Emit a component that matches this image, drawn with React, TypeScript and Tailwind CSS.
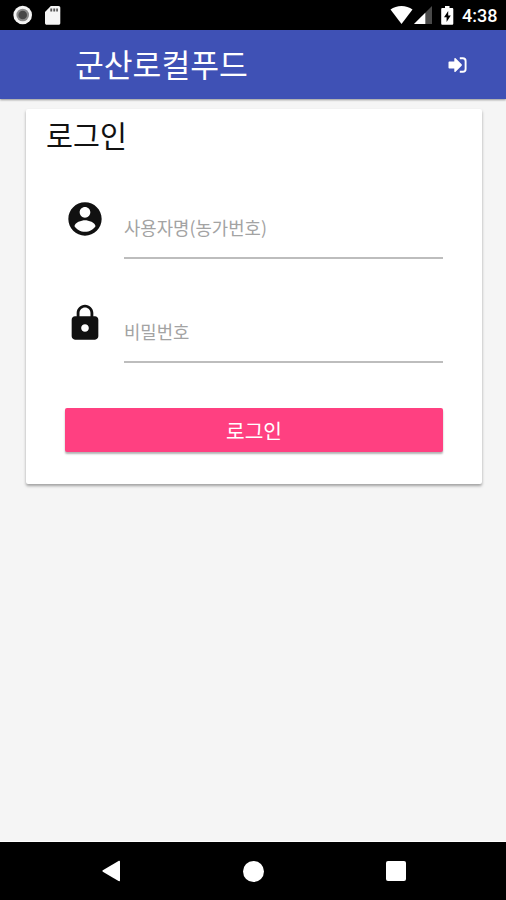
import React from 'react';

const StatusBar: React.FC = () => (
  <div className="flex h-[30px] shrink-0 items-center justify-between bg-black pl-[13px] pr-[9px] text-white">
    <div className="flex items-center gap-3">
      <svg width="20" height="20" viewBox="0 0 20 20">
        <circle cx="9.700" cy="10" r="9.300" fill="#f5f5f5" />
        <circle cx="9.700" cy="10" r="6.300" fill="#8b8b8b" />
        <circle cx="9.700" cy="10" r="4.300" fill="#484848" />
      </svg>
      <svg width="16" height="19" viewBox="0 0 16 19">
        <path
          d="M5.800 0H13.500C14.600 0 15.300.7 15.300 1.800V17c0 1.100-.7 1.800-1.800 1.800H1.800C.7 18.800 0 18.100 0 17V6z"
          fill="#f5f5f5"
        />
        <path d="M5.300 2.500h1.900v3H5.300zM8.300 2.500h1.900v3H8.300zM11.200 2.500h1.700v3h-1.700z" fill="#555" />
      </svg>
    </div>
    <div className="flex items-center">
      <svg width="24" height="18" viewBox="0 0 24 18">
        <path d="M.5 3.600C6.500-1.200 16.500-1.200 22.500 3.600L11.500 18z" fill="#fff" />
      </svg>
      <svg width="18" height="18" viewBox="0 0 18 18">
        <path d="M18 0V18H0z" fill="#4a4a4a" />
        <path d="M11.300 6.700V18H0z" fill="#fff" />
      </svg>
      <svg className="ml-[9px]" width="13" height="19" viewBox="0 0 13 19">
        <path d="M4 0h4.500v2H11c.8 0 1.300.5 1.300 1.300v14.200c0 .8-.5 1.300-1.300 1.300H1.500c-.8 0-1.300-.5-1.300-1.300V3.300C.2 2.500.7 2 1.500 2H4z" fill="#fff" />
        <path d="M7.200 5L3 11.200h2.600v4.700L9.800 9.500H7.200z" fill="#000" />
      </svg>
      <span className="ml-2 w-[35px] whitespace-nowrap pt-px font-['Roboto',sans-serif] text-[18px] font-medium leading-[29px]">
        4:38
      </span>
    </div>
  </div>
);

const Header: React.FC = () => (
  <header className="z-10 flex h-[69px] shrink-0 items-center justify-between bg-[#3f51b5] pl-[75px] pr-[39px] text-white shadow-[0_1px_2px_rgba(0,0,0,0.4)]">
    <h1 className="pb-[1px] text-[31.300px] leading-[68px]">군산로컬푸드</h1>
    <button aria-label="로그인">
      <svg width="19" height="16" viewBox="0 0 19 16">
        <path d="M1.300 4.500h5V1.800c0-.9.700-1.200 1.300-.6l6 6c.5.500.5 1.100 0 1.600l-6 6c-.6.600-1.300.3-1.300-.6v-2.700h-5c-.5 0-.8-.3-.8-.8V5.300c0-.5.300-.8.800-.8z" fill="#fff" />
        <path d="M11.800 1.300h3c1.700 0 2.800 1.100 2.800 2.800v7.800c0 1.700-1.100 2.800-2.800 2.800h-3" fill="none" stroke="#fff" strokeWidth="1.900" />
      </svg>
    </button>
  </header>
);

interface FieldProps {
  icon: string;
  label: string;
  type: string;
}

const Field: React.FC<FieldProps> = ({ icon, label, type }) => (
  <div className="flex h-[70px] items-start">
    <svg className="mt-[10px] shrink-0" width="40" height="40" viewBox="0 0 24 24" fill="#111">
      <path d={icon} />
    </svg>
    <input
      type={type}
      placeholder={label}
      className="ml-[19px] h-[70px] min-w-0 flex-1 border-b-2 border-[#bdbdbd] pb-[1px] pt-[8px] text-[17.800px] outline-none placeholder:text-[#a3a3a3]"
    />
  </div>
);

const accountIcon =
  'M12 2C6.480 2 2 6.480 2 12s4.480 10 10 10 10-4.480 10-10S17.520 2 12 2zm0 2.800c1.780 0 3.200 1.420 3.200 3.200s-1.420 3.200-3.200 3.200-3.200-1.420-3.200-3.200 1.420-3.200 3.200-3.200zm0 14.900c-2.700 0-4.900-1.400-6.300-3.400.050-2.300 4.200-3.600 6.300-3.600s6.250 1.300 6.300 3.600c-1.400 2-3.600 3.400-6.300 3.400z';
const lockIcon =
  'M18 8h-1V6c0-2.760-2.240-5-5-5S7 3.240 7 6v2H6c-1.100 0-2 .9-2 2v10c0 1.100.9 2 2 2h12c1.100 0 2-.9 2-2V10c0-1.100-.9-2-2-2zm-6 9.300c-1.270 0-2.300-1.030-2.300-2.300s1.030-2.300 2.300-2.300 2.300 1.030 2.300 2.300-1.030 2.300-2.300 2.300zm3.300-9.300H8.700V6c0-1.820 1.480-3.300 3.300-3.300s3.300 1.480 3.300 3.300v2z';

const LoginCard: React.FC = () => (
  <main className="flex-1 border-b border-white px-[26px] pt-[10px] pr-6">
    <section className="h-[375px] rounded-xs bg-white shadow-[0_2px_3px_rgba(0,0,0,0.35)]">
      <h2 className="pl-5 pt-[3px] text-[29.300px] leading-[44px] text-[#111]">로그인</h2>
      <form className="px-[39px] pt-[33px]">
        <Field icon={accountIcon} label="사용자명(농가번호)" type="text" />
        <div className="h-[34px]" />
        <Field icon={lockIcon} label="비밀번호" type="password" />
        <button
          type="button"
          className="mt-[45px] h-[44px] w-full rounded-xs bg-[#ff4081] text-[20.300px] leading-[44px] text-white shadow-[0_2px_2px_rgba(0,0,0,0.3)]"
        >
          로그인
        </button>
      </form>
    </section>
  </main>
);

const NavigationBar: React.FC = () => (
  <nav className="flex h-[58px] shrink-0 items-center bg-black pl-[101px]">
    <svg width="20" height="22" viewBox="0 0 20 22" fill="#fff">
      <path d="M1.800 10.300L17.500 1c.7-.4 1.500 0 1.500.8v18.400c0 .8-.8 1.200-1.500.8L1.800 11.700c-.5-.3-.5-1.100 0-1.400z" />
    </svg>
    <div className="ml-[122px] size-[21px] rounded-full bg-white" />
    <div className="ml-[122px] size-[20px] rounded-xs bg-white" />
  </nav>
);

const App: React.FC = () => (
  <div className="flex h-[900px] w-[506px] flex-col overflow-hidden bg-[#f5f5f5] font-['Noto_Sans_CJK_KR',sans-serif]">
    <StatusBar />
    <Header />
    <LoginCard />
    <NavigationBar />
  </div>
);

export default App;
